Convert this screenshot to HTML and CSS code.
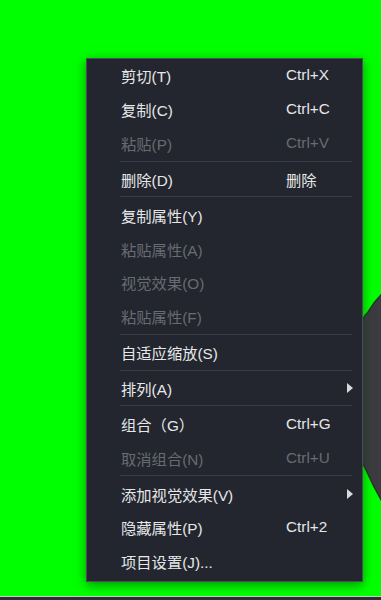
FILE: index.html
```html
<!DOCTYPE html>
<html lang="zh">
<head>
<meta charset="utf-8">
<link rel="stylesheet" href="styles.css">
</head>
<body>
<div class="canvas">
  <svg class="blob" width="40" height="240" viewBox="350 280 40 240">
    <path d="M358 330 Q362 318 368 312 Q375 300 384 292 L384 505 Q374 488 366 470 Q360 458 358 450 Z" fill="#3c3b41" stroke="#233b23" stroke-width="1.5"/>
  </svg>
  <div class="menu">
    <div class="row"><span class="label">剪切(T)</span><span class="key">Ctrl+X</span><span></span></div>
    <div class="row"><span class="label">复制(C)</span><span class="key">Ctrl+C</span><span></span></div>
    <div class="row off"><span class="label">粘贴(P)</span><span class="key">Ctrl+V</span><span></span></div>
    <div class="sep"></div>
    <div class="row"><span class="label">删除(D)</span><span class="key">删除</span><span></span></div>
    <div class="sep"></div>
    <div class="row"><span class="label">复制属性(Y)</span><span class="key"></span><span></span></div>
    <div class="row off"><span class="label">粘贴属性(A)</span><span class="key"></span><span></span></div>
    <div class="row off"><span class="label">视觉效果(O)</span><span class="key"></span><span></span></div>
    <div class="row off"><span class="label">粘贴属性(F)</span><span class="key"></span><span></span></div>
    <div class="sep"></div>
    <div class="row"><span class="label">自适应缩放(S)</span><span class="key"></span><span></span></div>
    <div class="sep"></div>
    <div class="row"><span class="label">排列(A)</span><span class="key"></span><span class="arrow"></span></div>
    <div class="sep"></div>
    <div class="row"><span class="label">组合（G）</span><span class="key">Ctrl+G</span><span></span></div>
    <div class="row off"><span class="label">取消组合(N)</span><span class="key">Ctrl+U</span><span></span></div>
    <div class="sep"></div>
    <div class="row"><span class="label">添加视觉效果(V)</span><span class="key"></span><span class="arrow"></span></div>
    <div class="row"><span class="label">隐藏属性(P)</span><span class="key">Ctrl+2</span><span></span></div>
    <div class="row"><span class="label">项目设置(J)...</span><span class="key"></span><span></span></div>
  </div>
</div>
<div class="bottombar"></div>
</body>
</html>
```
FILE: styles.css
```css
html, body {
  margin: 0;
  padding: 0;
}
body {
  width: 381px;
  height: 600px;
  overflow: hidden;
  background: #00ff00;
  font-family: "Liberation Sans", "Noto Sans CJK SC", sans-serif;
  display: flex;
  flex-direction: column;
}
.canvas {
  position: relative;
  height: 596px;
  flex: none;
  overflow: hidden;
}
.blob {
  position: absolute;
  left: 350px;
  top: 280px;
}
.menu {
  position: absolute;
  left: 86px;
  top: 58px;
  width: 275px;
  border: 1px solid #4a4e56;
  background: #23262e;
  padding: 0 0 2px;
  box-shadow: 0 3px 10px rgba(0, 60, 0, 0.55);
}
.row {
  display: grid;
  grid-template-columns: 165px 1fr 16px;
  align-items: center;
  height: 33.85px;
  box-sizing: border-box;
  padding: 0 8px 1px 34px;
  color: #e6e7e9;
  font-size: 15.3px;
}
.row.off {
  color: #686b72;
}
.label {
  white-space: nowrap;
}
.key {
  white-space: nowrap;
}
.arrow {
  justify-self: end;
  margin-right: 1px;
  width: 0;
  height: 0;
  border-top: 5px solid transparent;
  border-bottom: 5px solid transparent;
  border-left: 6px solid #d8d9dc;
}
.sep {
  height: 1px;
  margin: 0 10px 1px 33px;
  background: #3a3d45;
}
.bottombar {
  flex: 1;
  border-top: 1px solid #c9cbc9;
  background: #2a2d33;
}
```
